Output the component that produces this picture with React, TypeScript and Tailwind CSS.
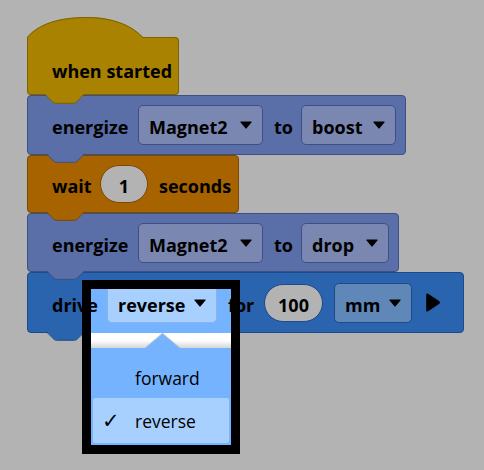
import React from "react";

function Tab({ fill, stroke }: { fill: string; stroke: string }) {
  return (
    <svg className="absolute left-[18px] bottom-[-9px] z-10" width="40" height="10" viewBox="0 0 40 10">
      <path d="M0,0 L8,8 Q9,9 10.5,9 L28.5,9 Q30,9 31,8 L39,0 Z" fill={fill} />
      <path d="M0.5,1 L8,8.3 Q9,9.3 10.5,9.3 L28.5,9.3 Q30,9.3 31,8.3 L38.5,1" fill="none" stroke={stroke} strokeWidth="1" />
    </svg>
  );
}

function Caret() {
  return (
    <svg width="12" height="8" viewBox="0 0 12 8" className="shrink-0">
      <path d="M1,0.5 L11,0.5 Q12,0.5 11.4,1.4 L6.6,7.3 Q6,8 5.4,7.3 L0.6,1.4 Q0,0.5 1,0.5 Z" fill="#000" />
    </svg>
  );
}

function Field({ label, w, bg, border }: { label: string; w: string; bg: string; border: string }) {
  return (
    <div
      className={`${w} h-[40px] shrink-0 flex items-center justify-between pl-[10px] pr-[10px] rounded-[5px] border`}
      style={{ background: bg, borderColor: border }}
    >
      <span className="whitespace-nowrap pt-[4px]">{label}</span>
      <Caret />
    </div>
  );
}

function Oval({ label, w, border }: { label: string; w: string; border: string }) {
  return (
    <div
      className={`${w} h-[38px] shrink-0 flex items-center justify-center rounded-full border bg-[#b3b3b3]`}
      style={{ borderColor: border }}
    >
      <span className="pt-[4px]">{label}</span>
    </div>
  );
}

function Txt({ children, w }: { children: React.ReactNode; w: string }) {
  return <span className={`${w} shrink-0 whitespace-nowrap pt-[4px]`}>{children}</span>;
}

export default function App() {
  const magnet = "#5a6ea8";
  const magnetB = "#3f4f85";
  const magnetF = "#7a87b0";
  const drive = "#2a63ae";
  const driveB = "#1d4a88";
  return (
    <div className="relative w-[484px] h-[470px] bg-[#b3b3b3] overflow-hidden font-['Open_Sans',sans-serif] font-bold text-[18px] text-black leading-none">
      <div className="flex flex-col items-start pl-[27px] pt-[16px]">
        {/* Hat block */}
        <div className="relative flex flex-col w-[152px]">
          <svg width="152" height="26" viewBox="0 0 152 26" className="block">
            <path d="M0,26 L0,21 C14,5 38,1 60,1 C84,1 104,8 116,21 L148,21 Q152,21 152,25 L152,26 Z" fill="#a88200" />
            <path
              d="M0.5,26 L0.5,21.3 C14,5.5 38,1.5 60,1.5 C84,1.5 104,8.5 115.8,21.5 L148,21.5 Q151.5,21.5 151.5,25 L151.5,26"
              fill="none"
              stroke="#7d6200"
            />
          </svg>
          <div className="h-[53px] bg-[#a88200] border-x border-b border-[#7d6200] rounded-b-[4px] flex items-center pl-[24px] pt-[2px]">
            <Txt w="w-[116px]">when started</Txt>
          </div>
          <Tab fill="#a88200" stroke="#7d6200" />
        </div>

        {/* energize 1 */}
        <div
          className="relative h-[60px] flex items-center gap-[11px] pl-[24px] pr-[9px] rounded-[4px] border"
          style={{ background: magnet, borderColor: magnetB }}
        >
          <Txt w="w-[75px]">energize</Txt>
          <Field label="Magnet2" w="w-[125px]" bg={magnetF} border={magnetB} />
          <Txt w="w-[16px]">to</Txt>
          <Field label="boost" w="w-[95px]" bg={magnetF} border={magnetB} />
          <Tab fill={magnet} stroke={magnetB} />
        </div>

        {/* wait */}
        <div className="relative h-[58px] flex items-center gap-[11px] pl-[24px] pr-[9px] rounded-[4px] border bg-[#a66300] border-[#7a4900]">
          <Txt w="w-[37px]">wait</Txt>
          <Oval label="1" w="w-[48px]" border="#7a4900" />
          <Txt w="w-[70px]">seconds</Txt>
          <Tab fill="#a66300" stroke="#7a4900" />
        </div>

        {/* energize 2 */}
        <div
          className="relative h-[59px] flex items-center gap-[11px] pl-[24px] pr-[9px] rounded-[4px] border"
          style={{ background: magnet, borderColor: magnetB }}
        >
          <Txt w="w-[75px]">energize</Txt>
          <Field label="Magnet2" w="w-[125px]" bg={magnetF} border={magnetB} />
          <Txt w="w-[16px]">to</Txt>
          <Field label="drop" w="w-[88px]" bg={magnetF} border={magnetB} />
          <Tab fill={magnet} stroke={magnetB} />
        </div>

        {/* drive */}
        <div
          className="relative h-[61px] flex items-center gap-[11px] pl-[24px] pr-[22px] rounded-[4px] border"
          style={{ background: drive, borderColor: driveB }}
        >
          <Txt w="w-[44px]">drive</Txt>
          <Field label="reverse" w="w-[110px]" bg="#5f88b9" border={driveB} />
          <Txt w="w-[25px]">for</Txt>
          <Oval label="100" w="w-[59px]" border={driveB} />
          <Field label="mm" w="w-[78px]" bg="#5f88b9" border={driveB} />
          <svg width="16" height="21" viewBox="0 0 16 21" className="ml-[2px] shrink-0">
            <path d="M1.2,2.8 Q1.2,0.6 3.1,1.8 L14.4,9.3 Q15.6,10.5 14.4,11.7 L3.1,19.2 Q1.2,20.4 1.2,18.2 Z" fill="#000" />
          </svg>
          <Tab fill={drive} stroke={driveB} />
        </div>
      </div>

      {/* Dropdown overlay */}
      <div className="absolute left-[82px] top-[280px] w-[158px] h-[174px] border-[9px] border-black bg-[#76b3ff] z-20 flex flex-col overflow-hidden">
        <div className="relative h-[44px] shrink-0 overflow-hidden bg-[#76b3ff]">
          <div className="absolute left-[-64px] top-[-17px] h-[61px] flex items-center gap-[11px] pl-[25px] whitespace-nowrap">
            <Txt w="w-[44px]">drive</Txt>
            <Field label="reverse" w="w-[110px]" bg="#a8d0ff" border="#8bb4e6" />
            <Txt w="w-[25px]">for</Txt>
          </div>
        </div>
        <div className="relative h-[15px] shrink-0 bg-gradient-to-b from-white via-white to-[#d6d6d6]">
          <svg className="absolute left-[54px] top-0" width="35" height="15" viewBox="0 0 35 15">
            <path d="M0,15 L17.5,0 L35,15 Z" fill="#76b3ff" />
            <path d="M0.5,14.5 L17.5,0.5 L34.5,14.5" fill="none" stroke="#b9c6d6" strokeWidth="1" />
          </svg>
        </div>
        <div className="flex-1 flex flex-col pt-[9px] px-[2px] font-normal text-[17.5px]">
          <div className="h-[41px] flex items-center pl-[42px] pt-[2px]">forward</div>
          <div className="h-[45px] flex items-center bg-[#a8d0ff] rounded-[2px] pl-[9px] pt-[2px]">
            <span className="w-[33px] font-['DejaVu_Sans',sans-serif] text-[21px] font-light">✓</span>
            <span>reverse</span>
          </div>
        </div>
      </div>
    </div>
  );
}
